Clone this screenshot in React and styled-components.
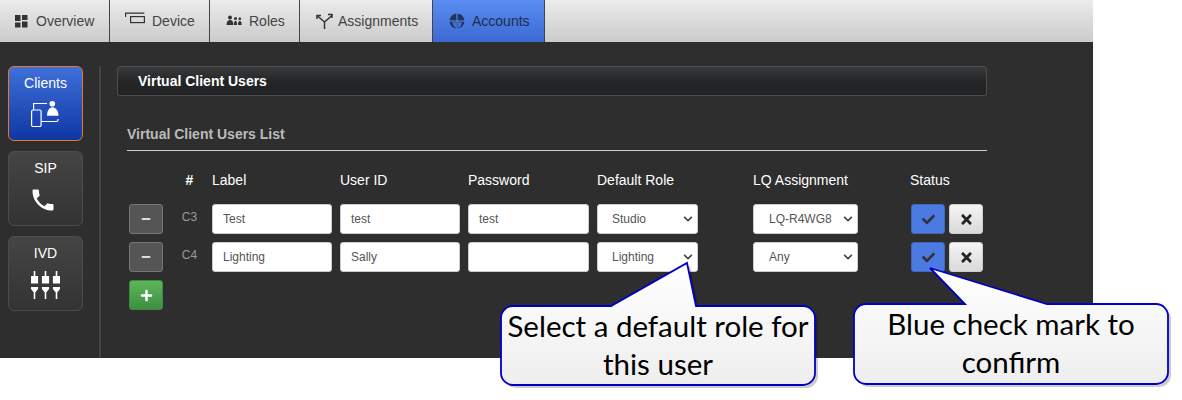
import React from 'react';
import styled, { createGlobalStyle } from 'styled-components';
import { FaCheck, FaTimes, FaPlus, FaMinus, FaChevronDown } from 'react-icons/fa';
import { MdPhone } from 'react-icons/md';

const GlobalStyle = createGlobalStyle`
  html, body {
    margin: 0;
    padding: 0;
    background: #fff;
  }
  body {
    font-family: "Liberation Sans", Arial, sans-serif;
    font-size: 14px;
  }
`;

const Page = styled.div`
  position: relative;
  width: 1182px;
  height: 400px;
  overflow: hidden;
`;

const Frame = styled.div`
  width: 1093px;
  height: 358px;
  background: #2e2e2e;
  display: flex;
  flex-direction: column;
`;

const TabBar = styled.nav`
  display: flex;
  height: 42px;
  flex-shrink: 0;
  background: linear-gradient(#ebebeb, #cbcbcb);
`;

const Tab = styled.div`
  display: flex;
  align-items: center;
  gap: ${p => p.$gap}px;
  width: ${p => p.$width}px;
  box-sizing: border-box;
  padding-left: ${p => p.$pad}px;
  border-right: 1px solid #444;
  background: ${p => (p.$active ? 'linear-gradient(#5a8df2, #3a69d2)' : 'none')};
  color: ${p => (p.$active ? '#1f2c4d' : '#444')};
`;

const Body = styled.div`
  display: flex;
  flex: 1;
  padding-top: 24px;
`;

const Sidebar = styled.aside`
  width: 101px;
  box-sizing: border-box;
  padding-left: 8px;
  border-right: 2px solid #444;
  display: flex;
  flex-direction: column;
  gap: 10px;
`;

const SideButton = styled.div`
  width: 75px;
  height: 75px;
  box-sizing: border-box;
  border-radius: 6px;
  border: 1px solid ${p => (p.$active ? '#e8762c' : '#4c4c4c')};
  background: ${p => (p.$active ? 'linear-gradient(#3f70da, #0f37a4)' : 'linear-gradient(#454545, #333)')};
  color: #fff;
  display: flex;
  flex-direction: column;
  align-items: center;
  padding-top: 8px;
  gap: 10px;
`;

const PhoneGlyph = styled(MdPhone)`
  margin-right: 5px;
`;

const Main = styled.main`
  flex: 1;
  padding-left: 16px;
`;

const PanelTitle = styled.div`
  width: 870px;
  height: 30px;
  box-sizing: border-box;
  border: 1px solid #4e4e4e;
  border-radius: 3px;
  background: linear-gradient(#3a3b3d, #232426 55%);
  color: #fff;
  font-weight: bold;
  line-height: 29px;
  padding-left: 20px;
`;

const ListHeading = styled.div`
  width: 860px;
  margin: 30px 0 0 10px;
  padding-bottom: 8px;
  border-bottom: 1px solid #ccc;
  color: #bbb;
  font-weight: bold;
  line-height: 16px;
`;

const Grid = styled.div`
  display: grid;
  grid-template-columns: 34px 49px 128px 128px 129px 156px 157px 80px;
  grid-template-rows: 31px 30px 30px 30px;
  row-gap: 8px;
  margin: 14px 0 0 12px;
`;

const HeaderCell = styled.div`
  color: #fff;
  line-height: 30px;
  height: 30px;
  text-align: ${p => (p.$center ? 'center' : 'left')};
  padding-left: ${p => (p.$center ? '4px' : '0')};
  font-weight: ${p => (p.$center ? 'bold' : 'normal')};
`;

const RowTag = styled.div`
  color: #999;
  font-size: 12px;
  line-height: 26px;
  text-align: center;
  padding-left: 4px;
`;

const fieldStyle = `
  height: 30px;
  box-sizing: border-box;
  background: #fff;
  border: 1px solid #ccc;
  border-radius: 3px;
  color: #555;
  font-family: "Liberation Sans", Arial, sans-serif;
  font-size: 12px;
  outline: none;
`;

const TextInput = styled.input`
  ${fieldStyle}
  width: ${p => p.$width}px;
  padding: 0 10px;
`;

const SelectBox = styled.div`
  position: relative;
  width: ${p => p.$width}px;
  height: 30px;
  color: #444;
  svg {
    position: absolute;
    right: 5px;
    top: 10px;
    pointer-events: none;
  }
`;

const Select = styled.select`
  ${fieldStyle}
  width: 100%;
  appearance: none;
  padding: 0 0 0 ${p => p.$pad}px;
`;

const SquareButton = styled.button`
  width: 34px;
  height: 30px;
  padding: 0;
  box-sizing: border-box;
  border-radius: 3px;
  display: inline-flex;
  align-items: center;
  justify-content: center;
  border: 1px solid ${p => ({ minus: '#777', add: '#3d8b3d', confirm: '#3d68bd', cancel: '#ccc' }[p.$kind])};
  background: ${p => ({
    minus: '#555',
    add: 'linear-gradient(#5cb85c, #3e8e41)',
    confirm: '#4a7ae2',
    cancel: 'linear-gradient(#f5f5f5, #d9d9d9)',
  }[p.$kind])};
  color: ${p => ({ minus: '#ddd', add: '#fff', confirm: '#333', cancel: '#222' }[p.$kind])};
`;

const StatusGroup = styled.div`
  display: flex;
  gap: 4px;
  margin-left: 1px;
`;

const Callout = styled.div`
  position: absolute;
  left: ${p => p.$left}px;
  top: ${p => p.$top}px;
  width: ${p => p.$width}px;
  height: ${p => p.$height}px;
`;

const CalloutShape = styled.svg`
  position: absolute;
  inset: 0;
  overflow: visible;
`;

const CalloutText = styled.div`
  position: absolute;
  left: 0;
  right: 0;
  bottom: ${p => p.$bottom}px;
  text-align: center;
  color: #000;
  font-family: Lato, "Open Sans", sans-serif;
  font-size: 29.5px;
  line-height: 38px;
`;

const OverviewIcon = () => (
  <svg width="15" height="15" viewBox="0 0 15 15" fill="#333">
    <rect x="1" y="1" width="5.500" height="6" />
    <rect x="8" y="1" width="5.500" height="5" />
    <rect x="1" y="8.500" width="5.500" height="5" />
    <rect x="8" y="7.500" width="5.500" height="6" />
  </svg>
);

const DeviceIcon = () => (
  <svg width="20" height="18" viewBox="0 0 20 18" fill="none" stroke="#333" strokeWidth="1.200">
    <path d="M.6 5V1.200h18.800" />
    <rect x="5.600" y="4.600" width="13.800" height="6" />
  </svg>
);

const RolesIcon = () => (
  <svg width="16" height="12" viewBox="0 0 16 12" fill="#333">
    <circle cx="4" cy="2.400" r="2" />
    <path d="M.5 10c0-3.500 1.500-5 3.500-5s3.500 1.500 3.500 5z" />
    <circle cx="9.500" cy="3.500" r="1.500" />
    <path d="M8 10c0-3 .5-4.200 1.500-4.200S11 7 11 10z" />
    <circle cx="13.800" cy="3.800" r="1.400" />
    <path d="M12 10c0-2.800.5-4 1.800-4s1.900 1.200 1.900 4z" />
  </svg>
);

const AssignmentsIcon = () => (
  <svg width="17" height="17" viewBox="0 0 17 17" fill="none" stroke="#333" strokeWidth="1.500">
    <path d="M1 2.500 8.500 9v7M16 2.500 8.500 9" />
    <path d="M1 6V2.500h4M12 1.500h4V5" />
  </svg>
);

const AccountsIcon = () => (
  <svg width="16" height="16" viewBox="0 0 16 16">
    <circle cx="8" cy="8" r="7.500" fill="#24365e" />
    <path d="M0 8h16M8 0v16" stroke="#5a8df2" strokeWidth="1.100" />
    <path d="M3 9.200h4v5H5.500zM9 9.200h4l-1.500 5H9z" fill="#3f6fd8" />
  </svg>
);

const ClientsIcon = () => (
  <svg width="30" height="26" viewBox="0 0 30 26" fill="none" stroke="#fff" strokeWidth="1.200">
    <rect x=".6" y="9" width="9.500" height="16.500" rx="1.500" />
    <path d="M2.600 9V2.500H16" />
    <path d="M10 20.500h15.500c1 0 1.500-.5 1.500-1.500v-1" />
    <circle cx="21.300" cy="2.800" r="2.800" fill="#fff" stroke="none" />
    <path d="M16 14.800c0-5 2.500-8.500 5.500-8.500s6 3.500 6 8.500z" fill="#fff" stroke="none" />
  </svg>
);

const IvdIcon = () => (
  <svg width="29" height="28" viewBox="0 0 29 28" fill="#fff">
    {[3.500, 14.500, 25.500].map(x => (
      <g key={x}>
        <rect x={x - 0.8} y="0" width="1.600" height="6" />
        <rect x={x - 3.600} y="5" width="7.200" height="7.500" />
        <path d={`M${x - 3.600} 16h7.200v2l-2.500 3h-2.200l-2.500-3z`} />
        <rect x={x - 0.8} y="20" width="1.600" height="8" />
      </g>
    ))}
  </svg>
);

const tabs = [
  { label: 'Overview', width: 110, pad: 14, gap: 7, icon: <OverviewIcon /> },
  { label: 'Device', width: 100, pad: 15, gap: 7, icon: <DeviceIcon /> },
  { label: 'Roles', width: 90, pad: 16, gap: 7, icon: <RolesIcon /> },
  { label: 'Assignments', width: 133, pad: 16, gap: 5, icon: <AssignmentsIcon /> },
  { label: 'Accounts', width: 112, pad: 16, gap: 7, icon: <AccountsIcon />, active: true },
];

const users = [
  { tag: 'C3', label: 'Test', id: 'test', password: 'test', role: 'Studio', lq: 'LQ-R4WG8' },
  { tag: 'C4', label: 'Lighting', id: 'Sally', password: '', role: 'Lighting', lq: 'Any' },
];

const UserRow = ({ user }) => (
  <>
    <SquareButton $kind="minus"><FaMinus size={10} /></SquareButton>
    <RowTag>{user.tag}</RowTag>
    <TextInput $width={120} defaultValue={user.label} />
    <TextInput $width={120} defaultValue={user.id} />
    <TextInput $width={121} defaultValue={user.password} />
    <SelectBox $width={101}>
      <Select $pad={14} defaultValue={user.role}>
        <option>{user.role}</option>
      </Select>
      <FaChevronDown size={10} />
    </SelectBox>
    <SelectBox $width={105}>
      <Select $pad={15} defaultValue={user.lq}>
        <option>{user.lq}</option>
      </Select>
      <FaChevronDown size={10} />
    </SelectBox>
    <StatusGroup>
      <SquareButton $kind="confirm"><FaCheck size={13} /></SquareButton>
      <SquareButton $kind="cancel"><FaTimes size={15} /></SquareButton>
    </StatusGroup>
  </>
);

export default function App() {
  return (
    <Page>
      <GlobalStyle />
      <Frame>
        <TabBar>
          {tabs.map(t => (
            <Tab key={t.label} $width={t.width} $pad={t.pad} $gap={t.gap} $active={t.active}>
              {t.icon}
              {t.label}
            </Tab>
          ))}
        </TabBar>
        <Body>
          <Sidebar>
            <SideButton $active>Clients<ClientsIcon /></SideButton>
            <SideButton>SIP<PhoneGlyph size={28} /></SideButton>
            <SideButton>IVD<IvdIcon /></SideButton>
          </Sidebar>
          <Main>
            <PanelTitle>Virtual Client Users</PanelTitle>
            <ListHeading>Virtual Client Users List</ListHeading>
            <Grid>
              <span />
              <HeaderCell $center>#</HeaderCell>
              <HeaderCell>Label</HeaderCell>
              <HeaderCell>User ID</HeaderCell>
              <HeaderCell>Password</HeaderCell>
              <HeaderCell>Default Role</HeaderCell>
              <HeaderCell>LQ Assignment</HeaderCell>
              <HeaderCell>Status</HeaderCell>
              {users.map(u => <UserRow key={u.tag} user={u} />)}
              <SquareButton $kind="add"><FaPlus size={13} /></SquareButton>
            </Grid>
          </Main>
        </Body>
      </Frame>
      <Callout $left={501} $top={306} $width={314} $height={79}>
        <CalloutShape width="314" height="79" viewBox="0 0 314 79">
          <defs>
            <linearGradient id="calloutFill" x1="0" y1="0" x2="0" y2="1">
              <stop offset="0" stopColor="#fff" />
              <stop offset="1" stopColor="#eee" />
            </linearGradient>
          </defs>
          <path d="M12 0H110L186 -43 195 0H302a12 12 0 0 1 12 12V67a12 12 0 0 1-12 12H12A12 12 0 0 1 0 67V12A12 12 0 0 1 12 0Z" fill="#000" opacity=".2" transform="translate(3 3)" />
          <path d="M12 0H110L186 -43 195 0H302a12 12 0 0 1 12 12V67a12 12 0 0 1-12 12H12A12 12 0 0 1 0 67V12A12 12 0 0 1 12 0Z" fill="url(#calloutFill)" stroke="#0000c0" strokeWidth="1.800" />
        </CalloutShape>
        <CalloutText $bottom={2}>Select a default role for<br />this user</CalloutText>
      </Callout>
      <Callout $left={854} $top={304} $width={314} $height={80}>
        <CalloutShape width="314" height="80" viewBox="0 0 314 80">
          <path d="M12 0H111L76 -36 193 0H302a12 12 0 0 1 12 12V68a12 12 0 0 1-12 12H12A12 12 0 0 1 0 68V12A12 12 0 0 1 12 0Z" fill="#000" opacity=".2" transform="translate(3 3)" />
          <path d="M12 0H111L76 -36 193 0H302a12 12 0 0 1 12 12V68a12 12 0 0 1-12 12H12A12 12 0 0 1 0 68V12A12 12 0 0 1 12 0Z" fill="url(#calloutFill)" stroke="#0000c0" strokeWidth="1.800" />
        </CalloutShape>
        <CalloutText $bottom={3}>Blue check mark to<br />confirm</CalloutText>
      </Callout>
    </Page>
  );
}
